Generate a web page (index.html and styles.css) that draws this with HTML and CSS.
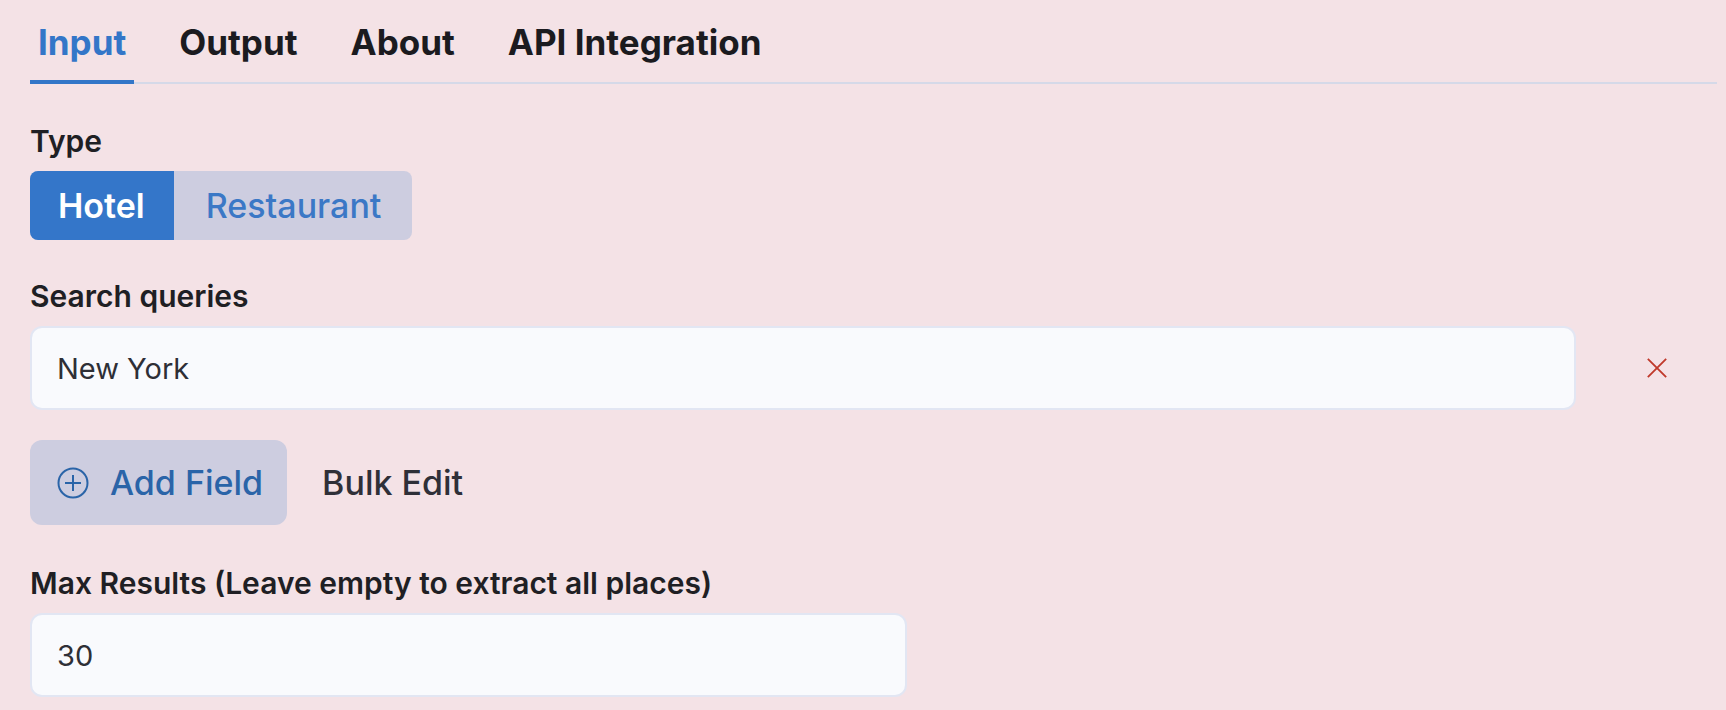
FILE: index.html
```html
<!DOCTYPE html>
<html lang="en">
<head>
  <meta charset="UTF-8" />
  <meta name="viewport" content="width=device-width, initial-scale=1" />
  <title>Input</title>
  <link rel="stylesheet" href="styles.css">
</head>
<body>

  <div class="tabs">
    <div class="tab active">Input</div>
    <div class="tab">Output</div>
    <div class="tab">About</div>
    <div class="tab">API Integration</div>
  </div>

  <div class="field first">
    <label>Type</label>
    <div class="segmented">
      <div class="segment selected">Hotel</div>
      <div class="segment">Restaurant</div>
    </div>
  </div>

  <div class="field">
    <label>Search queries</label>
    <div class="query-row">
      <input class="text-input" type="text" value="New York" />
      <button class="remove" title="Remove">
        <svg width="24" height="24" viewBox="0 0 24 24">
          <path d="M2 2 L22 22 M22 2 L2 22" stroke="#c0392b" stroke-width="2" fill="none" />
        </svg>
      </button>
    </div>
  </div>

  <div class="actions">
    <button class="add-btn">
      <svg width="32" height="32" viewBox="0 0 32 32">
        <circle cx="16" cy="16" r="14.5" stroke="#2a64a8" stroke-width="2" fill="none" />
        <path d="M16 8 V24 M8 16 H24" stroke="#2a64a8" stroke-width="2" fill="none" />
      </svg>
      Add Field
    </button>
    <button class="bulk-btn">Bulk Edit</button>
  </div>

  <div class="field">
    <label>Max Results (Leave empty to extract all places)</label>
    <input class="text-input short" type="text" value="30" />
  </div>

</body>
</html>
```

FILE: styles.css
```css
body {
  margin: 0;
  padding: 0 9px 0 30px;
  background: #f4e2e6;
  font-family: Inter, "Noto Sans", sans-serif;
  color: #1f1f24;
}
.tabs {
  display: flex;
  gap: 37px;
  height: 82px;
  border-bottom: 2px solid #d5d9e8;
}
.tab {
  padding: 0 8px;
  display: flex;
  align-items: center;
  font-size: 35px;
  font-weight: 700;
  color: #1b1b1f;
  margin-bottom: -2px;
  border-bottom: 4px solid transparent;
  padding-top: 4px;
}
.tab.active {
  color: #3376c8;
  border-bottom-color: #3376c8;
}
.field {
  margin-top: 38px;
}
.field.first {
  margin-top: 39px;
}
.field label {
  display: block;
  font-size: 30px;
  font-weight: 600;
  line-height: 36px;
  margin-bottom: 12px;
}
.segmented {
  display: inline-flex;
  height: 69px;
  border-radius: 8px;
  overflow: hidden;
  background: #cdcde0;
}
.segment {
  display: flex;
  align-items: center;
  padding: 0 31px 0 32px;
  font-size: 34px;
  font-weight: 500;
  color: #3b78c6;
}
.segment.selected {
  padding: 0 29px 0 28px;
  background: #3476c9;
  color: #fff;
  font-weight: 600;
}
.query-row {
  display: flex;
  align-items: center;
  padding-right: 49px;
}
.text-input {
  box-sizing: border-box;
  height: 84px;
  flex: 1;
  min-width: 0;
  padding: 0 25px;
  font-family: Inter, "Noto Sans", sans-serif;
  font-size: 29px;
  color: #2e2f36;
  background: #f9fafd;
  border: 2px solid #e2e6f3;
  border-radius: 12px;
  outline: none;
}
.text-input.short {
  width: 877px;
  display: block;
}
.remove {
  margin-left: 70px;
  padding: 0;
  width: 22px;
  height: 22px;
  border: none;
  background: none;
  display: flex;
  cursor: pointer;
}
.remove svg {
  width: 22px;
  height: 22px;
}
.actions {
  display: flex;
  align-items: center;
  margin-top: 30px;
}
.add-btn {
  display: flex;
  align-items: center;
  gap: 21px;
  height: 85px;
  padding: 0 24px 0 27px;
  border: none;
  border-radius: 12px;
  background: #cdcde0;
  color: #2a64a8;
  font-family: Inter, "Noto Sans", sans-serif;
  font-size: 34px;
  font-weight: 500;
  cursor: pointer;
}
.bulk-btn {
  margin-left: 35px;
  padding: 0;
  border: none;
  background: none;
  color: #2f3038;
  font-family: Inter, "Noto Sans", sans-serif;
  font-size: 34px;
  font-weight: 500;
  cursor: pointer;
}
.field:last-child {
  margin-top: 40px;
}
```
